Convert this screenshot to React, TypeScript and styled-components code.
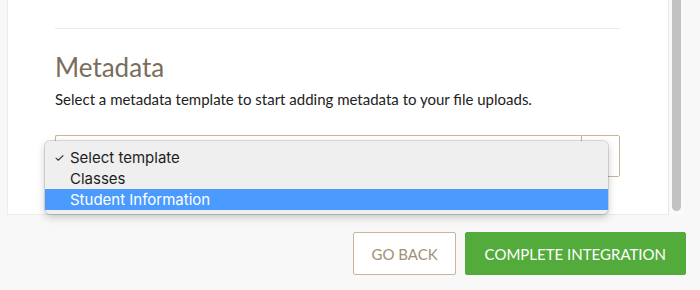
import React from 'react';
import styled, { createGlobalStyle } from 'styled-components';

const GlobalStyle = createGlobalStyle`
  html, body {
    margin: 0;
    padding: 0;
    background: #f8f8f8;
  }
  body {
    font-family: 'Lato', 'Liberation Sans', sans-serif;
    overflow: hidden;
  }
`;

const Page = styled.div`
  width: 700px;
  height: 290px;
  display: flex;
  flex-direction: column;
`;

const Body = styled.div`
  display: flex;
  height: 215px;
  padding-left: 7px;
`;

const Card = styled.div`
  width: 661px;
  box-sizing: border-box;
  background: #fff;
  border: 1px solid #ececec;
  border-top: none;
  border-right: none;
  padding: 28px 48px 0 47px;
  position: relative;
`;

const Divider = styled.hr`
  margin: 0;
  border: none;
  border-top: 1px solid #ececec;
`;

const Heading = styled.h2`
  margin: 22px 0 0;
  font-size: 26px;
  line-height: 32px;
  font-weight: 400;
  color: #7a6d5c;
`;

const Description = styled.p`
  margin: 7px 0 0;
  font-size: 15px;
  line-height: 18px;
  color: #222;
`;

const SelectRow = styled.div`
  display: flex;
  margin-top: 27px;
  height: 42px;
`;

const SelectField = styled.div`
  flex: 1;
  border: 1px solid #c9b59c;
  border-right: none;
  border-radius: 2px 0 0 2px;
`;

const SelectArrow = styled.div`
  width: 37px;
  border: 1px solid #c9b59c;
  border-radius: 0 2px 2px 0;
`;

const Menu = styled.ul`
  position: absolute;
  left: 37px;
  top: 141px;
  width: 563px;
  margin: 0;
  padding: 6px 0 4px;
  list-style: none;
  background: #efefef;
  border-radius: 5px;
  box-shadow: 0 0 0 1px rgba(0, 0, 0, 0.12), 0 3px 8px rgba(0, 0, 0, 0.22);
  font-family: 'Inter', 'Liberation Sans', sans-serif;
  font-size: 15px;
`;

const MenuItem = styled.li<{ $active?: boolean }>`
  display: flex;
  align-items: center;
  height: 21px;
  padding-left: 9px;
  color: ${(p) => (p.$active ? '#fff' : '#1e1e1e')};
  background: ${(p) => (p.$active ? '#4b9bff' : 'transparent')};
`;

const Check = styled.span`
  width: 16px;
  font-size: 12px;
`;

const Scrollbar = styled.div`
  width: 15px;
  background: #fafafa;
  border-left: 1px solid #e6e6e6;
  display: flex;
  justify-content: center;
  padding-bottom: 4px;
`;

const Thumb = styled.div`
  width: 9px;
  background: #c2c2c2;
  border-radius: 0 0 5px 5px;
`;

const Footer = styled.div`
  display: flex;
  justify-content: flex-end;
  gap: 9px;
  padding: 17px 14px 0 0;
`;

const Button = styled.button<{ $primary?: boolean }>`
  height: 43px;
  box-sizing: border-box;
  padding: 0 ${(p) => (p.$primary ? '19px' : '17px')};
  font-family: 'Lato', 'Liberation Sans', sans-serif;
  font-size: 15px;
  text-transform: uppercase;
  border-radius: 2px;
  border: 1px solid ${(p) => (p.$primary ? '#53ab3b' : '#c9b59c')};
  background: ${(p) => (p.$primary ? '#53ab3b' : '#fff')};
  color: ${(p) => (p.$primary ? '#fff' : '#a38f76')};
`;

const App = () => (
  <Page>
    <GlobalStyle />
    <Body>
      <Card>
        <Divider />
        <Heading>Metadata</Heading>
        <Description>
          Select a metadata template to start adding metadata to your file uploads.
        </Description>
        <SelectRow>
          <SelectField />
          <SelectArrow />
        </SelectRow>
        <Menu>
          <MenuItem>
            <Check>✓</Check>Select template
          </MenuItem>
          <MenuItem>
            <Check />Classes
          </MenuItem>
          <MenuItem $active>
            <Check />Student Information
          </MenuItem>
        </Menu>
      </Card>
      <Scrollbar>
        <Thumb />
      </Scrollbar>
    </Body>
    <Footer>
      <Button>Go Back</Button>
      <Button $primary>Complete Integration</Button>
    </Footer>
  </Page>
);

export default App;
